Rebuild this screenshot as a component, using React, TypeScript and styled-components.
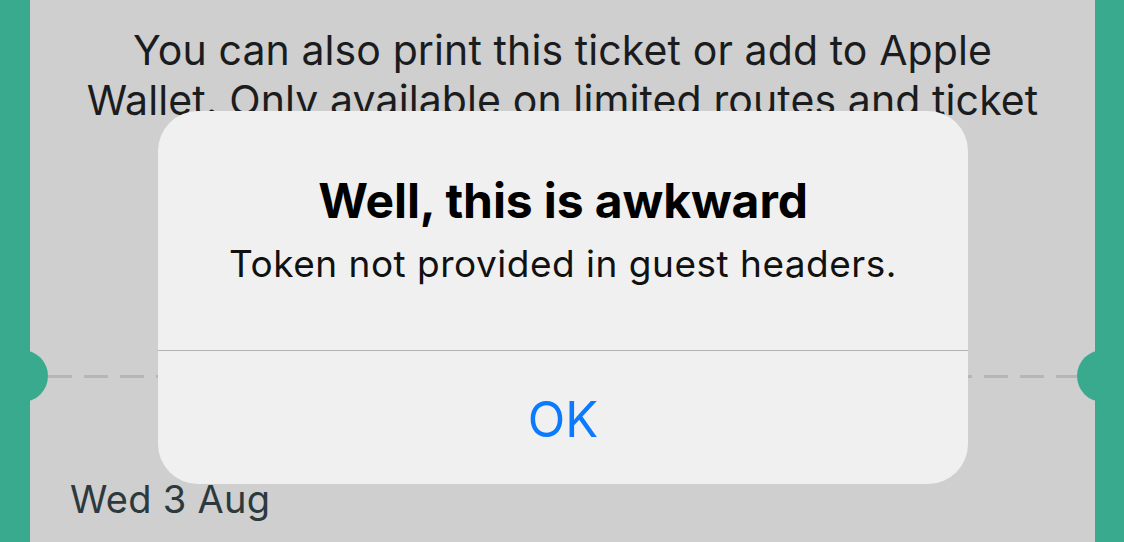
import React from "react";
import styled, { createGlobalStyle } from "styled-components";

const Global = createGlobalStyle`
  html, body { margin: 0; padding: 0; }
  body {
    width: 1124px;
    height: 542px;
    overflow: hidden;
    font-family: Inter, "Noto Sans", "Liberation Sans", sans-serif;
    -webkit-font-smoothing: antialiased;
  }
`;

const Page = styled.div`
  position: relative;
  display: flex;
  width: 1124px;
  height: 542px;
  overflow: hidden;
  background: #3aaa8f;
`;

const Edge = styled.div<{ $w: number }>`
  flex: 0 0 ${(p) => p.$w}px;
  background: #3aaa8f;
`;

const Ticket = styled.div`
  position: relative;
  flex: 1;
  display: flex;
  flex-direction: column;
  background: #cfcfcf;
`;

const Notice = styled.p`
  margin: 0;
  padding-top: 25px;
  text-align: center;
  font-size: 41px;
  line-height: 50px;
  color: #1b1c1e;
  letter-spacing: 0.1px;
`;

const Line = styled.span`
  display: block;
`;

const Perforation = styled.div`
  position: relative;
  margin-top: auto;
  height: 52px;
  display: flex;
  align-items: center;
  padding: 0 18px;
`;

const Notch = styled.div<{ $side: "left" | "right" }>`
  position: absolute;
  top: 0;
  ${(p) => (p.$side === "left" ? "left: -34px;" : "right: -34px;")}
  width: 52px;
  height: 52px;
  border-radius: 50%;
  background: #3aaa8f;
  z-index: 1;
`;

const Dashes = styled.div`
  flex: 1;
  height: 3px;
  background: repeating-linear-gradient(
    to right,
    #b6b6b6 0 24px,
    transparent 24px 36px
  );
`;

const DateRow = styled.div`
  height: 140px;
  padding: 74px 0 0 40px;
  box-sizing: border-box;
  font-size: 38px;
  line-height: 46px;
  color: #2c393d;
  letter-spacing: 0.3px;
`;

const Dialog = styled.div`
  position: absolute;
  left: 158px;
  top: 111px;
  width: 810px;
  height: 373px;
  border-radius: 40px;
  background: #f0f0f0;
  display: flex;
  flex-direction: column;
  overflow: hidden;
  z-index: 2;
`;

const Body = styled.div`
  height: 240px;
  box-sizing: border-box;
  padding-top: 62px;
  display: flex;
  flex-direction: column;
  align-items: center;
  border-bottom: 1.5px solid #b3b3b3;
`;

const Title = styled.h2`
  margin: 0;
  font-size: 48px;
  font-weight: 700;
  line-height: 56px;
  color: #000;
  letter-spacing: -0.1px;
`;

const Message = styled.p`
  margin: 13px 0 0;
  font-size: 37px;
  line-height: 44px;
  color: #111;
  letter-spacing: 0.5px;
`;

const OkButton = styled.button`
  flex: 1;
  border: 0;
  background: transparent;
  font-family: inherit;
  font-size: 49px;
  color: #0a7aff;
  padding: 3px 0 0;
  cursor: pointer;
`;

export default function App() {
  return (
    <>
      <Global />
      <Page>
        <Edge $w={30} />
        <Ticket>
          <Notice>
            <Line>You can also print this ticket or add to Apple</Line>
            <Line>Wallet. Only available on limited routes and ticket</Line>
            <Line>types.</Line>
          </Notice>
          <Perforation>
            <Notch $side="left" />
            <Dashes />
            <Notch $side="right" />
          </Perforation>
          <DateRow>Wed 3 Aug</DateRow>
        </Ticket>
        <Edge $w={29} />
        <Dialog role="alertdialog">
          <Body>
            <Title>Well, this is awkward</Title>
            <Message>Token not provided in guest headers.</Message>
          </Body>
          <OkButton>OK</OkButton>
        </Dialog>
      </Page>
    </>
  );
}
